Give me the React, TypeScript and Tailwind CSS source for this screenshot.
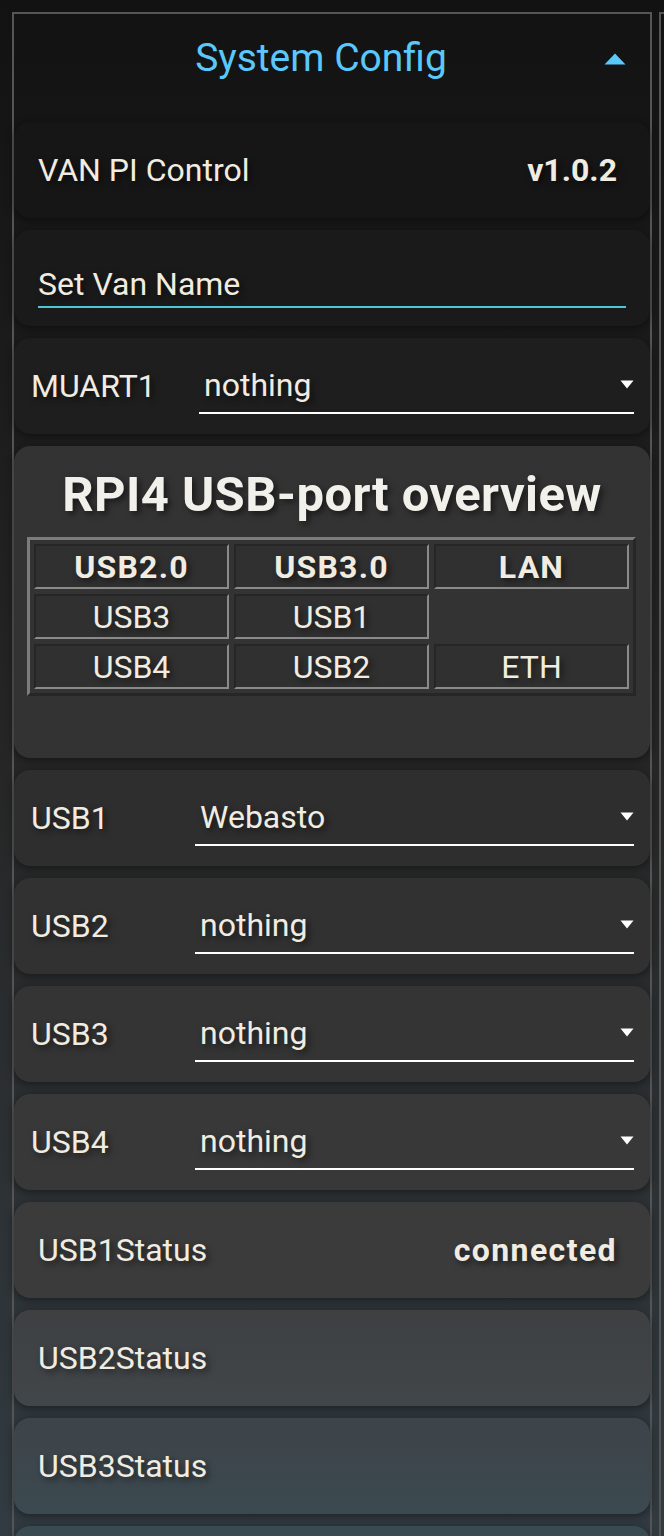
import React from "react";

const shadowText = "[text-shadow:3px_3px_6px_rgba(0,0,0,0.55)]";

type SelectRow = { label: string; value: string; bg: string; labelW: string };

const selectRows: SelectRow[] = [
  { label: "USB1", value: "Webasto", bg: "bg-[#2e2e2e]", labelW: "w-[164px]" },
  { label: "USB2", value: "nothing", bg: "bg-[#313131]", labelW: "w-[164px]" },
  { label: "USB3", value: "nothing", bg: "bg-[#343434]", labelW: "w-[164px]" },
  { label: "USB4", value: "nothing", bg: "bg-[#383838]", labelW: "w-[164px]" },
];

const statusRows = [
  { label: "USB1Status", value: "connected", bg: "bg-[#3b3b3c]" },
  { label: "USB2Status", value: "", bg: "bg-gradient-to-b from-[#3e4042] to-[#41464a]" },
  { label: "USB3Status", value: "", bg: "bg-gradient-to-b from-[#3e4449] to-[#3b4950]" },
  { label: "", value: "", bg: "bg-[#3a4a52]" },
];

const cardBase = "rounded-[16px] shadow-[0_2px_8px_rgba(0,0,0,0.45)]";

function Caret({ color = "#ffffff" }: { color?: string }) {
  return (
    <svg width="14" height="9" viewBox="0 0 14 9">
      <path d="M0.5 0.5 H13.5 L7 8.5 Z" fill={color} />
    </svg>
  );
}

function Select({ label, value, bg, labelW }: SelectRow) {
  return (
    <div className={`${cardBase} ${bg} h-[96px] flex items-center pl-[17px] pr-[16px]`}>
      <div className={`${labelW} shrink-0 ${shadowText}`}>{label}</div>
      <div className="flex-1 h-[56px] border-b-2 border-white flex items-center justify-between pl-[5px]">
        <span className={shadowText}>{value}</span>
        <span className="mb-[2px]"><Caret /></span>
      </div>
    </div>
  );
}

function Cell({ text, bold }: { text: string; bold?: boolean }) {
  if (!text) return <div />;
  return (
    <div
      className={`h-[45px] flex items-center justify-center bg-[#303030] border-2 border-t-[#262626] border-l-[#262626] border-b-[#8a8a8a] border-r-[#8a8a8a] ${bold ? "font-bold tracking-[1.2px]" : ""} ${shadowText}`}
    >
      {text}
    </div>
  );
}

export default function App() {
  const ports = [
    ["USB2.0", "USB3.0", "LAN"],
    ["USB3", "USB1", ""],
    ["USB4", "USB2", "ETH"],
  ];

  return (
    <div className="w-[664px] h-[1536px] overflow-hidden bg-gradient-to-b from-[#121212] via-[#262626] to-[#313b41] font-['Roboto',sans-serif] text-[32px] text-[#f0ece1]">
      <div className="flex gap-[7px] pt-[12px] pl-[12px]">
        <div className="w-[640px] shrink-0 border-2 border-[#555555] border-b-0 h-[1600px]">
          <div className="h-[88px] flex items-center pl-[24px] pr-[24px]">
            <div className="flex-1 text-center text-[39px] text-[#5ac8fa]">System Config</div>
            <svg width="22" height="12" viewBox="0 0 22 12" className="mt-[2px]">
              <path d="M11 0.5 L21.5 11.5 H0.5 Z" fill="#5ac8fa" />
            </svg>
          </div>

          <div className="mt-[20px] flex flex-col gap-[12px]">
            <div className={`${cardBase} bg-[#161616] h-[96px] flex items-center justify-between pl-[24px] pr-[33px]`}>
              <span className={shadowText}>VAN PI Control</span>
              <span className={`font-bold ${shadowText}`}>v1.0.2</span>
            </div>

            <div className={`${cardBase} bg-[#1a1a1a] h-[96px] flex items-center px-[24px]`}>
              <div className="w-full mt-[8px] h-[52px] border-b-2 border-[#4fc6d6] flex items-center">
                <span className={`pt-[5px] ${shadowText}`}>Set Van Name</span>
              </div>
            </div>

            <Select label="MUART1" value="nothing" bg="bg-[#1e1e1e]" labelW="w-[168px]" />

            <div className={`${cardBase} bg-[#333333] h-[312px] pt-[20px] px-[13px]`}>
              <div className={`text-center text-[49px] tracking-[0.4px] font-bold leading-[58px] text-[#f2f0ea] ${shadowText}`}>
                RPI4 USB-port overview
              </div>
              <div className="mt-[13px] w-[609px] border-[3px] border-t-[#7c7c7c] border-l-[#7c7c7c] border-b-[#262626] border-r-[#262626] p-[4px] grid grid-cols-3 gap-[5px]">
                {ports.map((row, r) =>
                  row.map((t, c) => <Cell key={`${r}-${c}`} text={t} bold={r === 0} />)
                )}
              </div>
            </div>

            {selectRows.map((s) => (
              <Select key={s.label} {...s} />
            ))}

            {statusRows.map((s, i) => (
              <div
                key={i}
                className={`${cardBase} ${s.bg} h-[96px] flex items-center justify-between pl-[24px] pr-[33px]`}
              >
                <span className={shadowText}>{s.label}</span>
                <span className={`font-bold tracking-[1.4px] ${shadowText}`}>{s.value}</span>
              </div>
            ))}
          </div>
        </div>
        <div className="w-[300px] shrink-0 border-2 border-[#555555] h-[1600px]" />
      </div>
    </div>
  );
}
